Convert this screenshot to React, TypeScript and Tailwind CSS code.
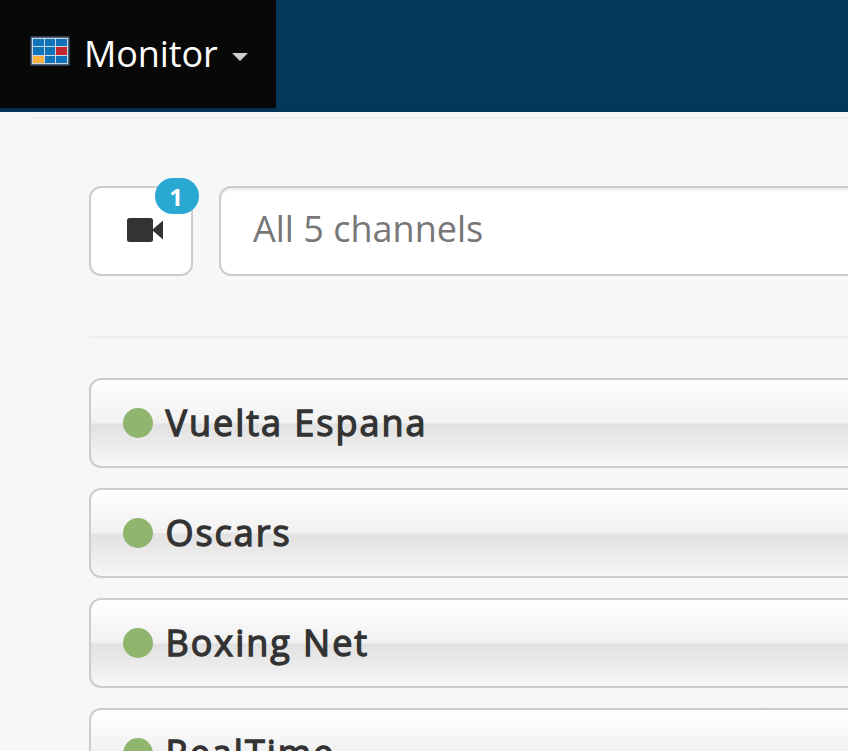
const channels = ["Vuelta Espana", "Oscars", "Boxing Net", "RealTime"];

const cells = [
  "#1072ba", "#1072ba", "#1072ba",
  "#1072ba", "#1072ba", "#c1272d",
  "#fbb03b", "#1072ba", "#1072ba",
];

function GridLogo() {
  return (
    <svg className="h-[30px] w-10 shrink-0" viewBox="0 0 40 30">
      <rect width="40" height="30" rx="1.5" fill="#2b3f54" />
      <rect x="1" y="1" width="38" height="28" fill="#4c6076" />
      <rect x="2" y="2" width="36" height="26" fill="#c8d6e2" />
      {cells.map((fill, i) => (
        <rect
          key={i}
          x={[3, 15, 26][i % 3]}
          y={[3, 11, 20][Math.floor(i / 3)]}
          width={[11, 10, 11][i % 3]}
          height={[7, 8, 7][Math.floor(i / 3)]}
          fill={fill}
        />
      ))}
    </svg>
  );
}

function Header() {
  return (
    <header className="flex h-28 shrink-0 border-b-2 border-[#03355a] bg-[#05375a]">
      <button className="flex h-[108px] w-[276px] items-center bg-[#080808] pl-[30px] shadow-[0_2px_0_#032f4d]">
        <span className="-mt-[6px] flex">
          <GridLogo />
        </span>
        <span className="ml-[14px] w-[134px] whitespace-nowrap text-left text-[36px] leading-[40px] tracking-[-0.1px] text-white">
          Monitor
        </span>
        <svg className="ml-[14px] mt-[6px] h-2 w-4" viewBox="0 0 16 8">
          <path d="M0 0h16L8 8z" fill="#ccc" />
        </svg>
      </button>
    </header>
  );
}

function Toolbar() {
  return (
    <div className="flex h-[90px] gap-[26px]">
      <button className="relative flex h-[90px] w-[104px] shrink-0 items-center justify-center rounded-xl border-2 border-[#ccc] bg-white">
        <svg className="mb-[2px] ml-2 h-6 w-9" viewBox="0 0 36 24">
          <rect width="26" height="24" rx="2.5" fill="#333" />
          <path d="M25 12L36 2.5v19z" fill="#333" />
        </svg>
        <span className="absolute -top-[10px] left-16 flex h-9 w-11 items-center justify-center rounded-[18px] bg-[#29a9d2] pr-[2px] pt-px text-[24px] font-bold leading-none text-white">
          1
        </span>
      </button>
      <input
        className="h-[90px] w-[700px] shrink-0 rounded-xl border-2 border-[#ccc] bg-white pb-[6px] pl-8 text-[36px] text-[#777] shadow-[inset_0_2px_2px_rgba(0,0,0,0.075)] outline-none placeholder:text-[#777]"
        placeholder="All 5 channels"
      />
    </div>
  );
}

function ChannelRow({ name }: { name: string }) {
  return (
    <li className="flex h-[90px] w-[830px] shrink-0 items-center rounded-xl border-2 border-[#ccc] bg-[linear-gradient(#fff_0%,#f1f1f1_50%,#e1e1e1_51%,#f6f6f6_100%)] pl-8">
      <span className="size-[30px] rounded-full bg-[#90b56f]" />
      <span className="ml-[12.5px] whitespace-nowrap text-[36px] leading-[50px] tracking-[1.97px] text-[#333] [-webkit-text-stroke:1.3px_#333]">
        {name}
      </span>
    </li>
  );
}

export default function App() {
  return (
    <div className="flex h-[751px] w-[848px] flex-col overflow-hidden bg-[#f6f8f8] font-['Open_Sans',sans-serif]">
      <Header />
      <div className="ml-8 mt-[5px] h-[2px] shrink-0 bg-[#eee]" />
      <main className="ml-[89px] mt-[67px] flex flex-col">
        <Toolbar />
        <div className="mt-[60px] h-[2px] shrink-0 bg-[#eee]" />
        <ul className="mt-10 flex flex-col gap-5">
          {channels.map((name) => (
            <ChannelRow key={name} name={name} />
          ))}
        </ul>
      </main>
    </div>
  );
}
